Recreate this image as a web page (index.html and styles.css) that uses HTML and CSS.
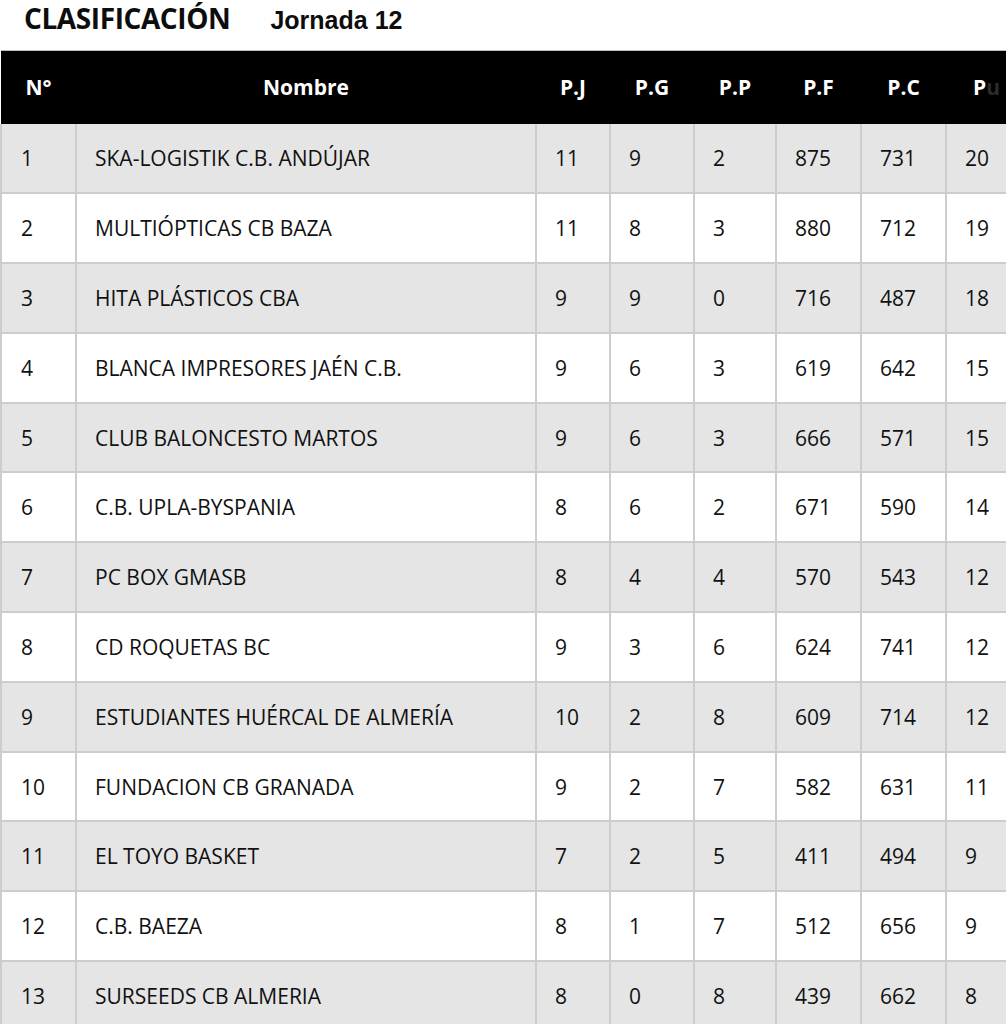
FILE: index.html
```html
<!DOCTYPE html>
<html lang="es">
<head>
<meta charset="utf-8">
<title>Clasificación</title>
<link rel="stylesheet" href="styles.css">
</head>
<body>
<div class="page">
  <div class="titlebar">
    <h1 class="title">CLASIFICACIÓN</h1>
    <span class="jornada">Jornada 12</span>
  </div>
  <table class="standings">
    <colgroup>
      <col class="c-n"><col class="c-name"><col class="c-pj"><col class="c-pg"><col class="c-pp"><col class="c-pf"><col class="c-pc"><col class="c-p">
    </colgroup>
    <thead>
      <tr><th>N°</th><th>Nombre</th><th>P.J</th><th>P.G</th><th>P.P</th><th>P.F</th><th>P.C</th><th>P<span class="fade">u</span></th></tr>
    </thead>
    <tbody>
      <tr><td>1</td><td>SKA-LOGISTIK C.B. ANDÚJAR</td><td>11</td><td>9</td><td>2</td><td>875</td><td>731</td><td>20</td></tr>
      <tr><td>2</td><td>MULTIÓPTICAS CB BAZA</td><td>11</td><td>8</td><td>3</td><td>880</td><td>712</td><td>19</td></tr>
      <tr><td>3</td><td>HITA PLÁSTICOS CBA</td><td>9</td><td>9</td><td>0</td><td>716</td><td>487</td><td>18</td></tr>
      <tr><td>4</td><td>BLANCA IMPRESORES JAÉN C.B.</td><td>9</td><td>6</td><td>3</td><td>619</td><td>642</td><td>15</td></tr>
      <tr><td>5</td><td>CLUB BALONCESTO MARTOS</td><td>9</td><td>6</td><td>3</td><td>666</td><td>571</td><td>15</td></tr>
      <tr><td>6</td><td>C.B. UPLA-BYSPANIA</td><td>8</td><td>6</td><td>2</td><td>671</td><td>590</td><td>14</td></tr>
      <tr><td>7</td><td>PC BOX GMASB</td><td>8</td><td>4</td><td>4</td><td>570</td><td>543</td><td>12</td></tr>
      <tr><td>8</td><td>CD ROQUETAS BC</td><td>9</td><td>3</td><td>6</td><td>624</td><td>741</td><td>12</td></tr>
      <tr><td>9</td><td>ESTUDIANTES HUÉRCAL DE ALMERÍA</td><td>10</td><td>2</td><td>8</td><td>609</td><td>714</td><td>12</td></tr>
      <tr><td>10</td><td>FUNDACION CB GRANADA</td><td>9</td><td>2</td><td>7</td><td>582</td><td>631</td><td>11</td></tr>
      <tr><td>11</td><td>EL TOYO BASKET</td><td>7</td><td>2</td><td>5</td><td>411</td><td>494</td><td>9</td></tr>
      <tr><td>12</td><td>C.B. BAEZA</td><td>8</td><td>1</td><td>7</td><td>512</td><td>656</td><td>9</td></tr>
      <tr><td>13</td><td>SURSEEDS CB ALMERIA</td><td>8</td><td>0</td><td>8</td><td>439</td><td>662</td><td>8</td></tr>
    </tbody>
  </table>
</div>
</body>
</html>
```
FILE: styles.css
```css
html, body {
  margin: 0;
  padding: 0;
  background: #ffffff;
  overflow: hidden;
}
.page {
  width: 1006px;
  height: 1024px;
  overflow: hidden;
}
.titlebar {
  display: flex;
  align-items: baseline;
  height: 50px;
  padding-left: 24px;
  box-sizing: border-box;
}
.title {
  margin: 0;
  font-family: "Open Sans", sans-serif;
  font-weight: 700;
  font-size: 28px;
  letter-spacing: -0.4px;
  line-height: 36px;
  color: #0d0d0d;
}
.jornada {
  margin-left: 40px;
  font-family: "Liberation Sans", Arial, sans-serif;
  font-weight: 700;
  font-size: 25px;
  color: #0d0d0d;
}
.standings {
  border-collapse: collapse;
  table-layout: fixed;
  width: 1030px;
  font-family: "Open Sans", sans-serif;
  color: #111;
}
.c-n { width: 75px; }
.c-name { width: 460px; }
.c-pj { width: 74px; }
.c-pg { width: 84px; }
.c-pp { width: 82px; }
.c-pf { width: 85px; }
.c-pc { width: 85px; }
.c-p { width: 85px; }
.standings thead tr {
  background: #000;
  height: 73px;
  border-top: 1px solid #bdbdbd;
}
.standings th {
  color: #fff;
  font-weight: 700;
  font-size: 21px;
  text-align: center;
  padding: 0;
}
.standings th .fade { color: #2c2c2c; }
.standings th:last-child { text-align: left; padding-left: 27px; }
.standings tbody tr {
  height: 69.8px;
  border-bottom: 2px solid #cdcdcd;
}
.standings tbody tr:nth-child(odd) { background: #e5e5e5; }
.standings tbody tr:nth-child(even) { background: #ffffff; }
.standings td {
  font-size: 21px;
  padding: 0 0 0 18px;
  text-align: left;
  border-left: 2px solid #cdcdcd;
  white-space: nowrap;
}
.standings td:first-child { padding-left: 19px; }
```
